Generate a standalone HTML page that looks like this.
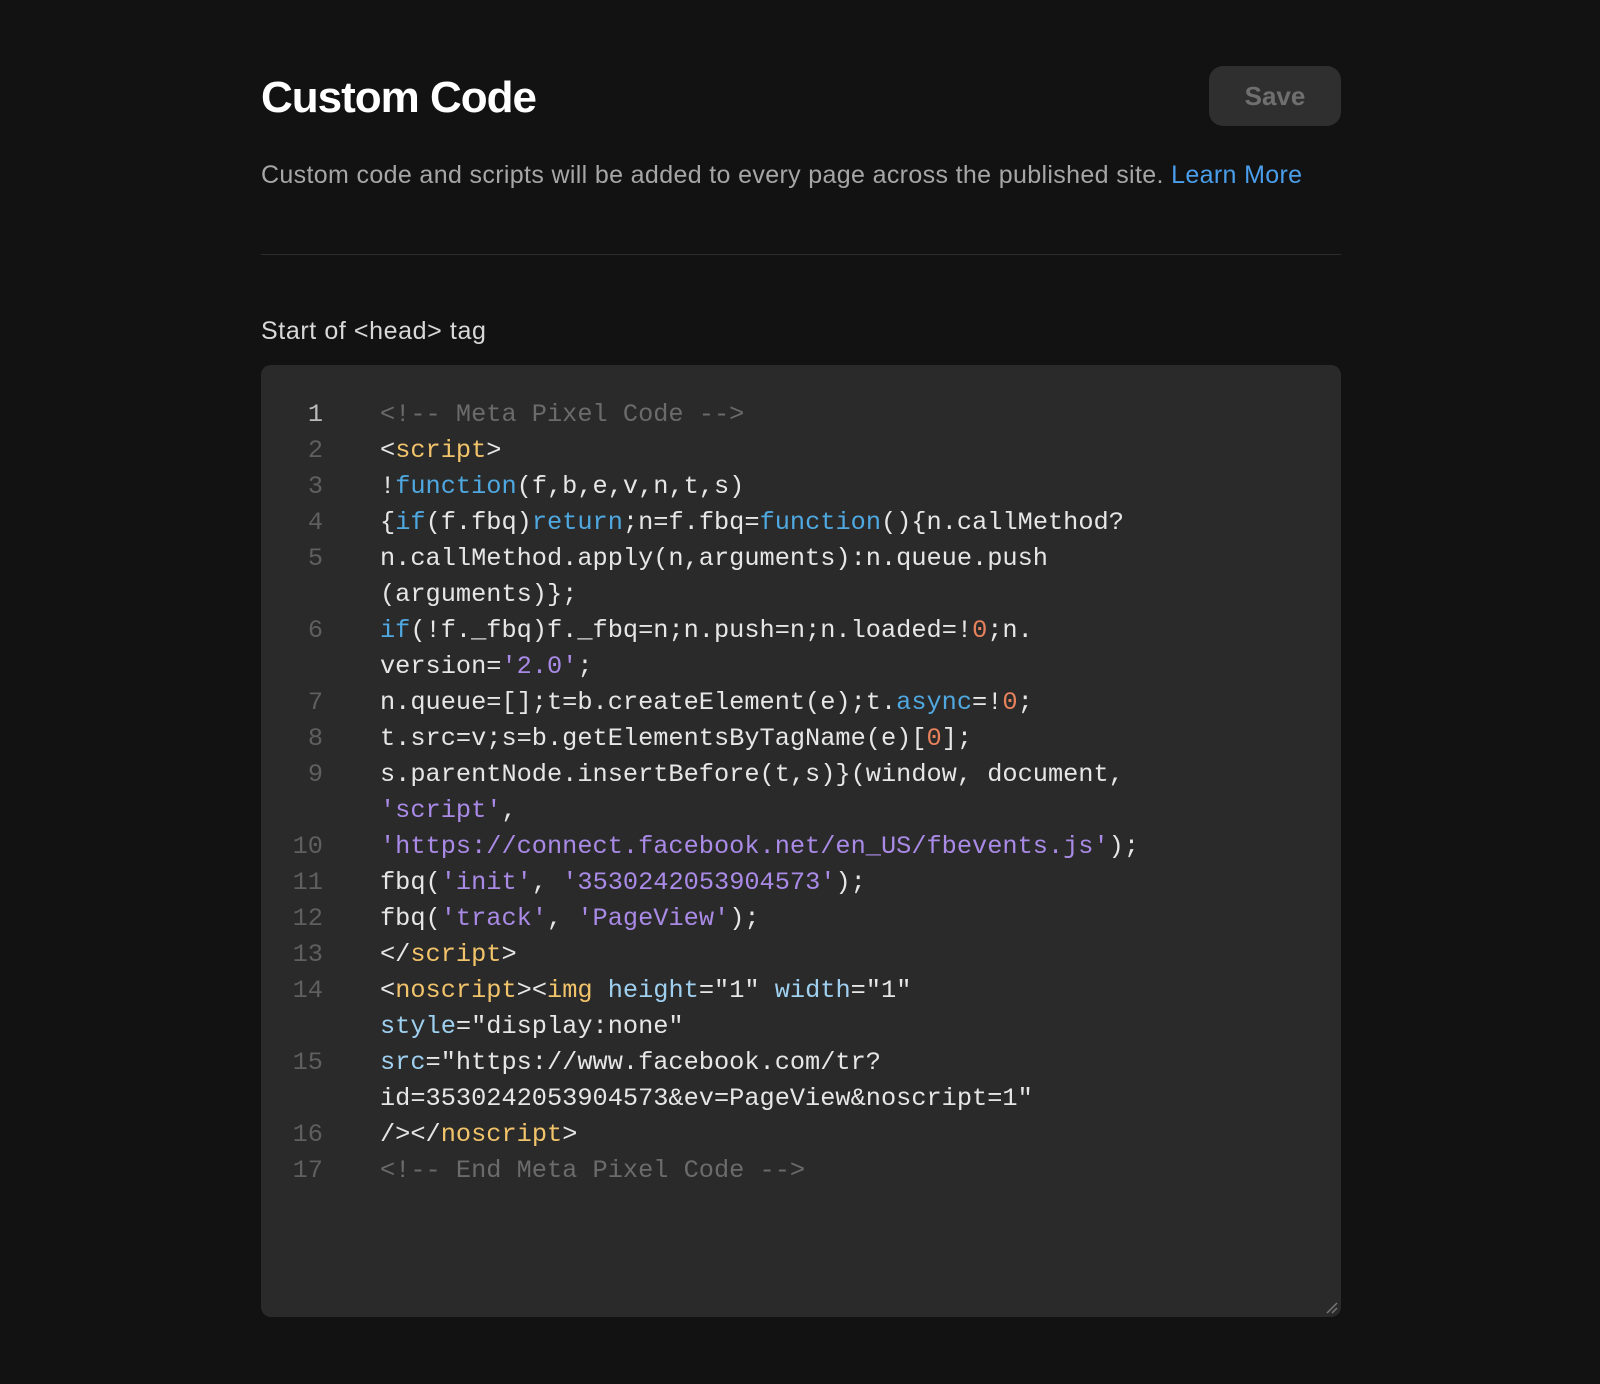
<!DOCTYPE html>
<html><head><style>
body{margin:0;background:#121212;width:1600px;height:1384px;overflow:hidden;font-family:"Liberation Sans",sans-serif;}
.wrap{position:absolute;left:261px;width:1080px;top:0}
h1{position:absolute;top:73px;left:0;margin:0;font-size:44px;font-weight:bold;color:#fff;letter-spacing:-1px}
.save{position:absolute;left:948px;top:66px;width:132px;height:60px;border-radius:14px;background:#2f2f2f;color:#6f6f6f;font-weight:bold;font-size:26px;line-height:60px;text-align:center}
.desc{position:absolute;top:161px;left:0;font-size:25px;letter-spacing:0.35px;color:#a6a6a6;white-space:nowrap}
.desc a{color:#4a9eea;text-decoration:none}
.hr{position:absolute;top:254px;left:0;width:1080px;height:1px;background:#2c2c2c}
.lbl{position:absolute;top:317px;left:0;font-size:25px;letter-spacing:0.6px;color:#d8d8d8}
.box{position:absolute;top:365px;left:0;width:1080px;height:952px;background:#2a2a2a;border-radius:10px}
.code{position:absolute;top:32px;left:0;font-family:"Liberation Mono",monospace;font-size:25.3px;line-height:36px;color:#e6e6e6}
.ln{position:absolute;left:0;width:62px;text-align:right;color:#5f5f5f}
.tx{position:absolute;left:119px;top:0;white-space:pre}
.c{color:#6b6b6b}.y{color:#f1c36a}.b{color:#4fa8e0}.p{color:#a98ae6}.o{color:#e8825c}.a{color:#9fd0f0}
</style></head><body><div class="wrap">
<h1>Custom Code</h1>
<div class="save">Save</div>
<div class="desc">Custom code and scripts will be added to every page across the published site. <a>Learn More</a></div>
<div class="hr"></div>
<div class="lbl">Start of &lt;head&gt; tag</div>
<div class="box"><div class="code">
<div class="ln" style="top:0;color:#bbb">1</div><div class="ln" style="top:36px">2</div><div class="ln" style="top:72px">3</div><div class="ln" style="top:108px">4</div><div class="ln" style="top:144px">5</div><div class="ln" style="top:216px">6</div><div class="ln" style="top:288px">7</div><div class="ln" style="top:324px">8</div><div class="ln" style="top:360px">9</div><div class="ln" style="top:432px">10</div><div class="ln" style="top:468px">11</div><div class="ln" style="top:504px">12</div><div class="ln" style="top:540px">13</div><div class="ln" style="top:576px">14</div><div class="ln" style="top:648px">15</div><div class="ln" style="top:720px">16</div><div class="ln" style="top:756px">17</div>
<div class="tx"><span class="c">&lt;!-- Meta Pixel Code --&gt;</span>
&lt;<span class="y">script</span>&gt;
!<span class="b">function</span>(f,b,e,v,n,t,s)
{<span class="b">if</span>(f.fbq)<span class="b">return</span>;n=f.fbq=<span class="b">function</span>(){n.callMethod?
n.callMethod.apply(n,arguments):n.queue.push
(arguments)};
<span class="b">if</span>(!f._fbq)f._fbq=n;n.push=n;n.loaded=!<span class="o">0</span>;n.
version=<span class="p">'2.0'</span>;
n.queue=[];t=b.createElement(e);t.<span class="b">async</span>=!<span class="o">0</span>;
t.src=v;s=b.getElementsByTagName(e)[<span class="o">0</span>];
s.parentNode.insertBefore(t,s)}(window, document,
<span class="p">'script'</span>,
<span class="p">'https://connect.facebook.net/en_US/fbevents.js'</span>);
fbq(<span class="p">'init'</span>, <span class="p">'3530242053904573'</span>);
fbq(<span class="p">'track'</span>, <span class="p">'PageView'</span>);
&lt;/<span class="y">script</span>&gt;
&lt;<span class="y">noscript</span>&gt;&lt;<span class="y">img</span> <span class="a">height</span>="1" <span class="a">width</span>="1"
<span class="a">style</span>="display:none"
<span class="a">src</span>="https://www.facebook.com/tr?
id=3530242053904573&amp;ev=PageView&amp;noscript=1"
/&gt;&lt;/<span class="y">noscript</span>&gt;
<span class="c">&lt;!-- End Meta Pixel Code --&gt;</span></div>
</div>
<svg style="position:absolute;right:2px;bottom:2px" width="16" height="16"><path d="M14 4L4 14M14 9L9 14" stroke="#777" stroke-width="1.5"/></svg>
</div>
</div></body></html>
